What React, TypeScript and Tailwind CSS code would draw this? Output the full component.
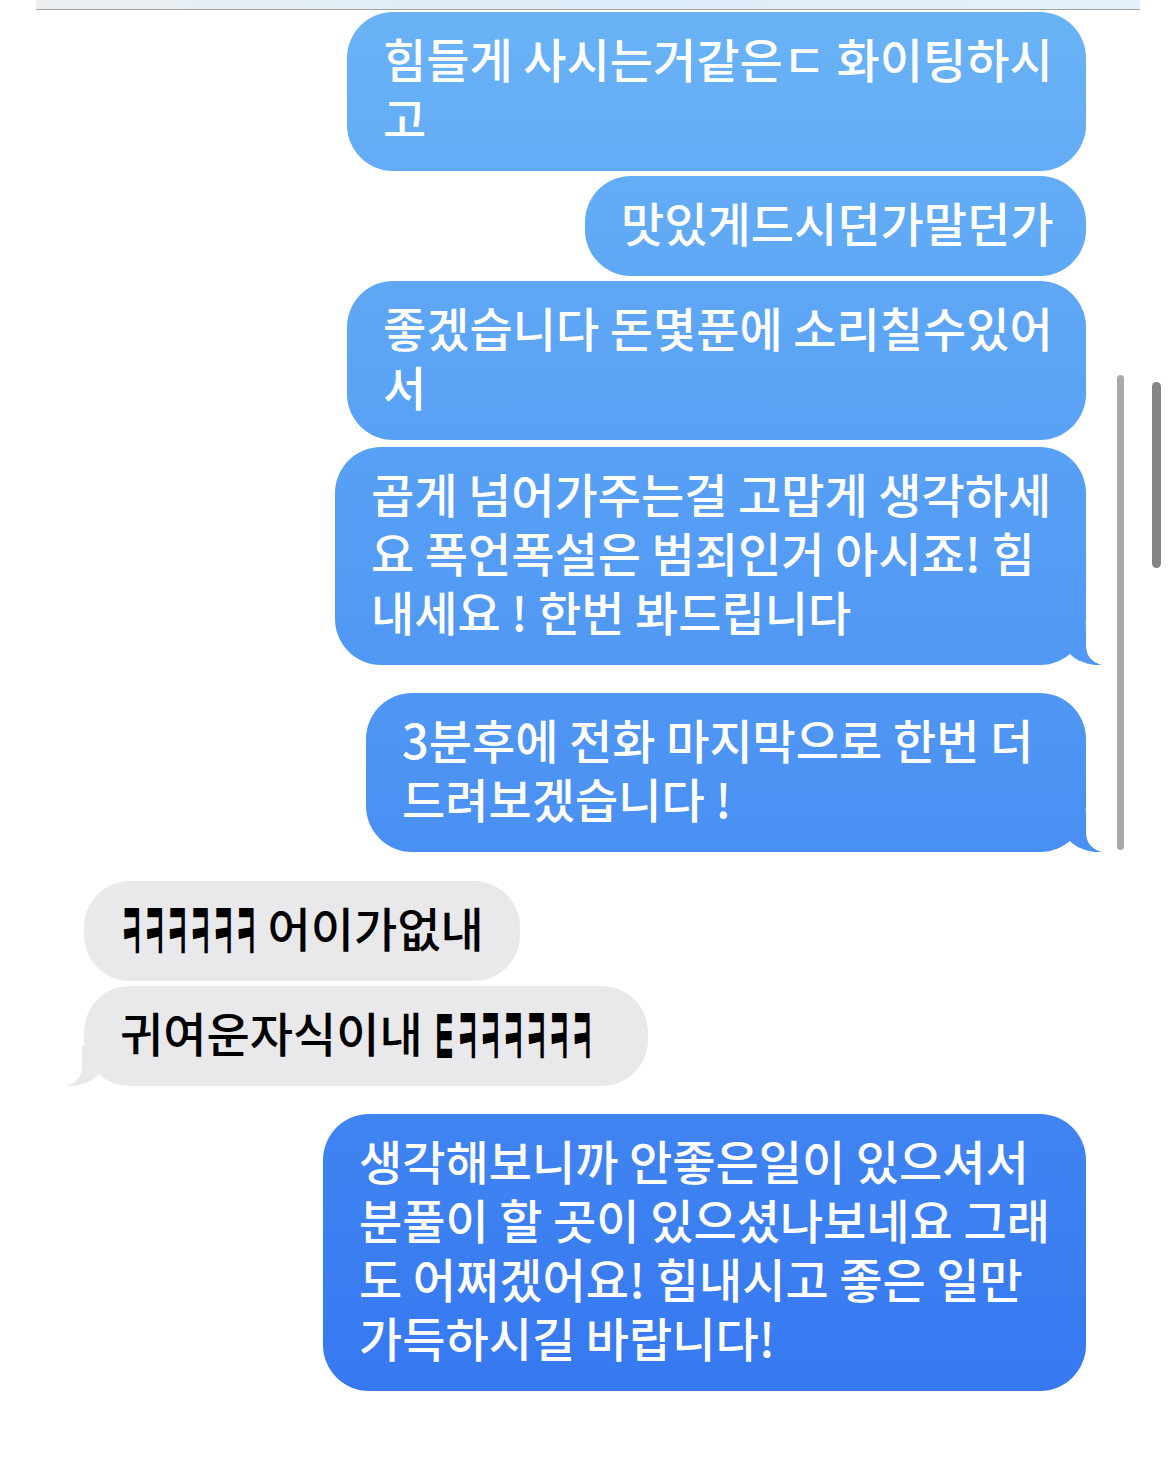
import type { ReactNode } from "react";

type Msg = {
  lines: ReactNode[];
  side: "me" | "them";
  width: string;
  tail?: boolean;
  gap: string;
};

// narrow laughter run: the system font draws ㅋ tall and slim, Noto draws it small and wide
const Kk = ({ text, w }: { text: string; w: string }) => (
  <span className={`inline-block ${w} whitespace-nowrap align-top`}>
    <span className="inline-block origin-left scale-x-[0.53] scale-y-[1.85] font-bold">{text}</span>
  </span>
);

const messages: Msg[] = [
  { lines: ["힘들게 사시는거같은ㄷ 화이팅하시", "고"], side: "me", width: "w-[739px]", gap: "mt-[2px]" },
  { lines: ["맛있게드시던가말던가"], side: "me", width: "w-[501px]", gap: "mt-[5px]" },
  { lines: ["좋겠습니다 돈몇푼에 소리칠수있어", "서"], side: "me", width: "w-[739px]", gap: "mt-[5px]" },
  {
    lines: ["곱게 넘어가주는걸 고맙게 생각하세", "요 폭언폭설은 범죄인거 아시죠! 힘", "내세요 ! 한번 봐드립니다"],
    side: "me",
    width: "w-[751px]",
    tail: true,
    gap: "mt-[7px]",
  },
  { lines: ["3분후에 전화 마지막으로 한번 더", "드려보겠습니다 !"], side: "me", width: "w-[720px]", tail: true, gap: "mt-[28px]" },
  {
    lines: [
      <>
        <Kk text="ㅋㅋㅋㅋㅋㅋ" w="w-[137px]" /> 어이가없내
      </>,
    ],
    side: "them",
    width: "w-[436px]",
    gap: "mt-[29px]",
  },
  {
    lines: [
      <>
        귀여운자식이내 <Kk text="ㅌㅋㅋㅋㅋㅋㅋ" w="w-[172px]" />
      </>,
    ],
    side: "them",
    width: "w-[564px]",
    tail: true,
    gap: "mt-[5px]",
  },
  {
    lines: [
      "생각해보니까 안좋은일이 있으셔서",
      "분풀이 할 곳이 있으셨나보네요 그래",
      "도 어쩌겠어요! 힘내시고 좋은 일만",
      "가득하시길 바랍니다!",
    ],
    side: "me",
    width: "w-[763px]",
    gap: "mt-[28px]",
  },
];

const blue = "bg-fixed bg-linear-to-b from-[#6ab3f6] to-[#3474f0]";

function Bubble({ msg }: { msg: Msg }) {
  const me = msg.side === "me";
  return (
    <div
      className={`relative ${msg.width} ${msg.gap} rounded-[46px] pt-[16px] pb-[25px] pl-[36px] ${
        me ? `self-end ${blue} text-white` : "self-start bg-[#e9e9eb] text-black"
      }`}
    >
      {msg.lines.map((line, i) => (
        <div key={i} className="whitespace-nowrap text-[47px] font-medium leading-[59px]">
          {line}
        </div>
      ))}
      {msg.tail && me && (
        <div
          className={`absolute bottom-0 right-[-16px] h-[40px] w-[34px] ${blue} [clip-path:path('M18_0L18_20C18_30_23_37_34_40C25_41_8_37_1_28L0_0Z')]`}
        />
      )}
      {msg.tail && !me && (
        <div className="absolute bottom-0 left-[-18px] h-[40px] w-[34px] bg-[#e9e9eb] [clip-path:path('M16_0L16_20C16_30_11_37_0_40C9_41_26_37_33_28L34_0Z')]" />
      )}
    </div>
  );
}

export default function App() {
  return (
    <div className="relative min-h-[1477px] w-[1170px] overflow-hidden bg-white font-['Noto_Sans_CJK_KR','Noto_Sans',sans-serif]">
      <div className="ml-[36px] mr-[30px] h-[10px] border-b border-[#a3a3a3] bg-linear-to-r from-[#eceff1] via-[#dcecf8] to-[#e4f1fb]" />
      <div className="flex flex-col px-[84px]">
        {messages.map((m, i) => (
          <Bubble key={i} msg={m} />
        ))}
      </div>
      {/* overlay scroll indicators */}
      <div className="absolute left-[1117px] top-[375px] h-[475px] w-[7px] rounded-full bg-[#a9a9a9]" />
      <div className="absolute left-[1152px] top-[382px] h-[186px] w-[9px] rounded-full bg-[#858585]" />
    </div>
  );
}
